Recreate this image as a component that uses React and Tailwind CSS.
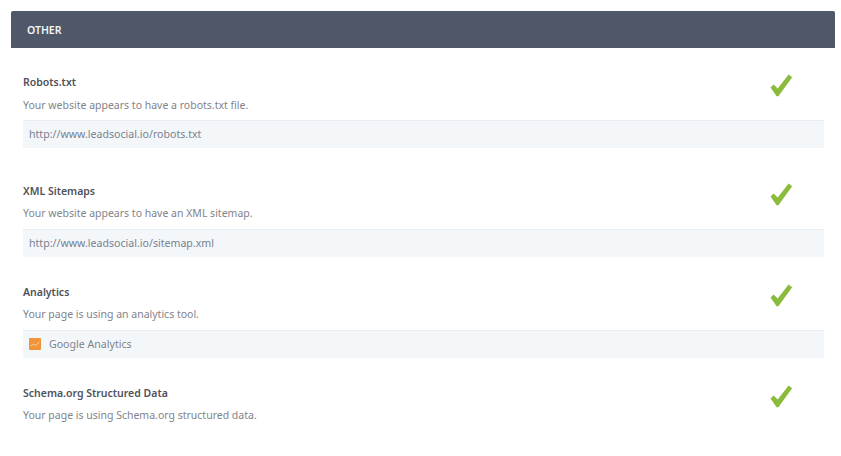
import React from "react";

const Check = () => (
  <svg width="24" height="24" viewBox="0 0 24 24" className="absolute right-[31px] top-[1px]">
    <path d="M1.5 14.6 L4.6 11.6 L8.7 15.6 L19.6 1.4 L23.2 4.2 L9.4 23.2 L7.6 23.2 Z" fill="#8abb3c" />
  </svg>
);

const AnalyticsIcon = () => (
  <svg width="12" height="12" viewBox="0 0 12 12" className="shrink-0">
    <rect width="12" height="12" rx="1" fill="#f0933a" />
    <path d="M1.5 8 L4.5 6 L6.5 7.5 L10.5 4" stroke="#fbd3a0" strokeWidth="1" fill="none" />
  </svg>
);

const Row = ({ title, desc, className, children }) => (
  <div className={`relative ${className}`}>
    <Check />
    <h4 className="text-[10.5px] leading-[20px] font-semibold text-[#4f525b]">{title}</h4>
    <p className="mt-[2.6px] text-[10.5px] leading-[20px] text-[#7f838b]">{desc}</p>
    {children}
  </div>
);

const Box = ({ children, className }) => (
  <div className={`mt-[5.4px] flex h-[28px] items-center gap-[8px] border-t border-[#e9edf1] bg-[#f4f7fa] px-[6px] pb-[1px] text-[10.6px] leading-[16px] ${className}`}>
    {children}
  </div>
);

export default function App() {
  return (
    <div className="h-[456px] w-[841px] overflow-hidden bg-white pt-[11px] pl-[11px] font-['Noto_Sans','Open_Sans',sans-serif]">
      <div className="w-[824px]">
        <div className="flex h-[37px] items-center rounded-t-[2px] bg-[#4e5868] px-[16px] pt-[2px] text-[10.5px] font-semibold text-[#f4f5f7]">
          OTHER
        </div>
        <div className="pt-[24px] pr-[11px] pl-[12px]">
          <Row title="Robots.txt" desc="Your website appears to have a robots.txt file.">
            <Box className="text-[#77808f]">http://www.leadsocial.io/robots.txt</Box>
          </Row>
          <Row className="mt-[32.8px]" title="XML Sitemaps" desc="Your website appears to have an XML sitemap.">
            <Box className="text-[#77808f]">http://www.leadsocial.io/sitemap.xml</Box>
          </Row>
          <Row className="mt-[25px]" title="Analytics" desc="Your page is using an analytics tool.">
            <Box className="text-[#7f838b]">
              <AnalyticsIcon />
              Google Analytics
            </Box>
          </Row>
          <Row className="mt-[25px]" title="Schema.org Structured Data" desc="Your page is using Schema.org structured data." />
        </div>
      </div>
    </div>
  );
}
